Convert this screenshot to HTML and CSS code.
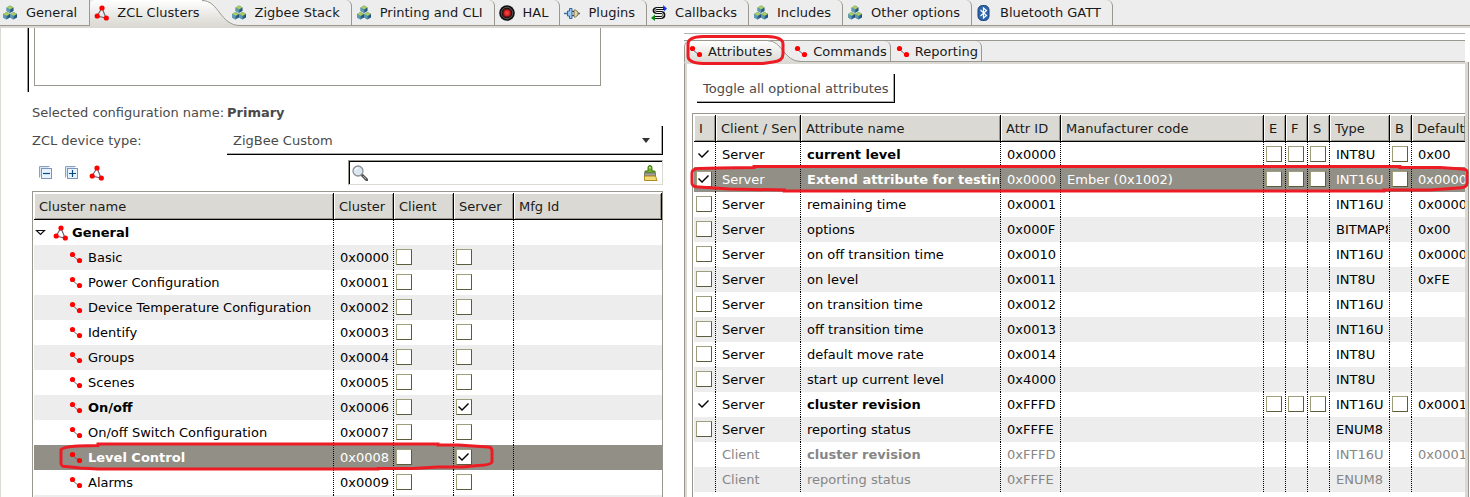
FILE: index.html
```html
<!DOCTYPE html>
<html lang="en">
<head>
<meta charset="utf-8">
<title>ZCL Clusters</title>
<link rel="stylesheet" href="styles.css">
</head>
<body>
<svg class="sprite" aria-hidden="true">
  <defs>
    <linearGradient id="tabfill" x1="0" y1="0" x2="0" y2="1"><stop offset="0" stop-color="#fff"/><stop offset="1" stop-color="#dad9d3"/></linearGradient>
    <linearGradient id="side" x1="0" y1="0" x2="1" y2="0"><stop offset="0" stop-color="#4f8fb5"/><stop offset="1" stop-color="#1d4a78"/></linearGradient>
    <radialGradient id="lamp"><stop offset="0" stop-color="#ff5050"/><stop offset="1" stop-color="#b80c0c"/></radialGradient>
    <g id="cube"><path d="M0 2 3.500 0 7 2 7 5.500 3.500 7.500 0 5.500z" fill="url(#side)"/><path d="M0 2 3.500 0 7 2 3.500 4z" fill="#a9cc62"/><path d="M0 2 3.500 4V7.500L0 5.500z" fill="#5f9bb0"/></g>
  </defs>
  <symbol id="cubes" viewBox="0 0 16 16"><use href="#cube" x="4.500" y="0.500"/><use href="#cube" x="1" y="7"/><use href="#cube" x="8" y="7"/></symbol>
  <symbol id="cluster" viewBox="0 0 16 16"><path d="M8 3 3 11 12 13z" fill="none" stroke="#667" stroke-width="1.200"/><g fill="#f00"><circle cx="8" cy="3" r="2.600"/><circle cx="3.200" cy="11" r="2.600"/><circle cx="12.300" cy="13" r="2.600"/></g></symbol>
  <symbol id="link" viewBox="0 0 16 16"><path d="M4 5 11 11" stroke="#667" stroke-width="1"/><g fill="#f00"><circle cx="4.500" cy="4.500" r="2.600"/><circle cx="11.500" cy="10.500" r="2.600"/></g></symbol>
  <symbol id="hal" viewBox="0 0 16 16"><circle cx="8" cy="8" r="7.800" fill="#111"/><circle cx="8" cy="8" r="5.700" fill="none" stroke="#666" stroke-width=".8"/><circle cx="8" cy="8" r="4" fill="url(#lamp)" stroke="#701010"/></symbol>
  <symbol id="plug" viewBox="0 0 16 16"><path d="M0 8.500h4M13 8.500h3" stroke="#3a6ba5" stroke-width="1.500"/><path d="M3.500 6h2V3.500h2.500v10H5.500V11h-2z" fill="#9cc7ee" stroke="#2f66a3"/><path d="M10 5h1.500l2.500 2v3l-2.500 2H10z" fill="#e3d59a" stroke="#7d7350"/><path d="M8 6.500h2M8 10.500h2" stroke="#446"/></symbol>
  <symbol id="callback" viewBox="0 0 16 16"><path d="M13 3.500H6C2 3.500 2 7.500 6 7.500h4c4 0 4 5 0 5H3" fill="none" stroke="#111" stroke-width="2.800"/><path d="M12 3.500H6C3 3.500 3 7.500 6 7.500h4c3 0 3 5 0 5H4" fill="none" stroke="#eee" stroke-width="1"/><path d="M12 0l4 3.500-3 3z" fill="#1536ee"/><path d="M4 9.500 0 13l4 3z" fill="#078b12"/></symbol>
  <symbol id="bluetooth" viewBox="0 0 16 16"><rect x="2" y=".5" width="11" height="15" rx="4.500" fill="#2e67ad" stroke="#173f7b"/><path d="M4.500 5l6 5.500-3 2.500V3l3 2.500-6 5.500" fill="none" stroke="#fff" stroke-width="1.200"/></symbol>
  <symbol id="collapse" viewBox="0 0 16 16"><path d="M2.500 12.500v-11h10" fill="#d9e8f6" stroke="#8aa0c4"/><rect x="4.500" y="3.500" width="10" height="10" fill="#e8f4fd" stroke="#7f93b8"/><path d="M6 8.500h7" stroke="#0b4a80" stroke-width="1.200"/></symbol>
  <symbol id="expand" viewBox="0 0 16 16"><path d="M2.500 12.500v-11h10" fill="#d9e8f6" stroke="#8aa0c4"/><rect x="4.500" y="3.500" width="10" height="10" fill="#e8f4fd" stroke="#7f93b8"/><path d="M6 8.500h7M9.500 5v7" stroke="#0b4a80" stroke-width="1.200"/></symbol>
  <symbol id="lens" viewBox="0 0 16 16"><path d="M10 10l5 5" stroke="#555" stroke-width="3" stroke-linecap="round"/><path d="M11 11l3 3" stroke="#aaa"/><circle cx="6" cy="6" r="5" fill="#dbe8f2" stroke="#8c9195" stroke-width="1.300"/><path d="M3 6a3 3 0 0 1 3-3" stroke="#fff" fill="none"/></symbol>
  <symbol id="brush" viewBox="0 0 16 16"><path d="M6 6V2.500a2 2 0 0 1 4 0V6h3v2H3V6z" fill="#73aa27" stroke="#3f7b10"/><path d="M8 2v1.500" stroke="#fff"/><path d="M2.500 8h11v3h-11z" fill="#a0a09a" stroke="#777"/><path d="M2.500 11h11l1.500 4.500H2.500z" fill="#f2dc75" stroke="#af8a20"/></symbol>
  <symbol id="open" viewBox="0 0 16 16"><path d="M2.500 5.500h8l-4 4z" fill="#fff" stroke="#111" stroke-width="1.200"/></symbol>
</svg>

<nav class="tabs" role="tablist" aria-label="Configuration">
  <button class="tab first" role="tab"><svg class="icon"><use href="#cubes"/></svg><span>General</span></button>
  <button class="tab active" role="tab" aria-selected="true"><svg class="icon"><use href="#cluster"/></svg><span>ZCL Clusters</span><svg class="curve" viewBox="0 0 38 26" aria-hidden="true"><path d="M0 0C17 0 18 25.500 38 25.500V26H0z" fill="url(#tabfill)"/><path d="M0 .5C17 .5 18 25.500 38 25.500" fill="none" stroke="#9a978e"/></svg></button>
  <button class="tab" role="tab"><svg class="icon"><use href="#cubes"/></svg><span>Zigbee Stack</span></button>
  <button class="tab" role="tab"><svg class="icon"><use href="#cubes"/></svg><span>Printing and CLI</span></button>
  <button class="tab" role="tab"><svg class="icon"><use href="#hal"/></svg><span>HAL</span></button>
  <button class="tab" role="tab"><svg class="icon"><use href="#plug"/></svg><span>Plugins</span></button>
  <button class="tab" role="tab"><svg class="icon"><use href="#callback"/></svg><span>Callbacks</span></button>
  <button class="tab" role="tab"><svg class="icon"><use href="#cubes"/></svg><span>Includes</span></button>
  <button class="tab" role="tab"><svg class="icon"><use href="#cubes"/></svg><span>Other options</span></button>
  <button class="tab" role="tab"><svg class="icon"><use href="#bluetooth"/></svg><span>Bluetooth GATT</span></button>
</nav>

<main class="workspace">
  <section class="clusters">
    <div class="group"><div class="list"></div></div>
    <div class="form">
      <span>Selected configuration name:</span><strong>Primary</strong>
      <label for="device">ZCL device type:</label>
      <div class="combo"><select id="device"><option>ZigBee Custom</option></select><svg class="arrow" viewBox="0 0 8 5" aria-hidden="true"><path d="M0 0h8L4 5z"/></svg></div>
    </div>
    <div class="toolbar">
      <button class="tool" aria-label="Collapse all"><svg class="icon"><use href="#collapse"/></svg></button>
      <button class="tool" aria-label="Expand all"><svg class="icon"><use href="#expand"/></svg></button>
      <button class="tool" aria-label="Clusters"><svg class="icon"><use href="#cluster"/></svg></button>
      <div class="search"><svg class="icon"><use href="#lens"/></svg><input type="text" aria-label="Search clusters"><button class="tool" aria-label="Clear"><svg class="icon"><use href="#brush"/></svg></button></div>
    </div>
    <div class="frame">
      <table>
        <colgroup><col class="w300"><col class="w60"><col class="w60"><col class="w60"><col></colgroup>
        <thead><tr><th>Cluster name</th><th>Cluster</th><th>Client</th><th>Server</th><th>Mfg Id</th></tr></thead>
        <tbody>
          <tr><td class="tree"><div class="node root"><svg class="icon"><use href="#open"/></svg><svg class="icon"><use href="#cluster"/></svg><b>General</b></div></td><td></td><td></td><td></td><td></td></tr>
          <tr><td class="tree"><div class="node"><svg class="icon"><use href="#link"/></svg>Basic</div></td><td>0x0000</td><td class="box"><input type="checkbox" aria-label="Basic client"></td><td class="box"><input type="checkbox" aria-label="Basic server"></td><td></td></tr>
          <tr><td class="tree"><div class="node"><svg class="icon"><use href="#link"/></svg>Power Configuration</div></td><td>0x0001</td><td class="box"><input type="checkbox" aria-label="Power Configuration client"></td><td class="box"><input type="checkbox" aria-label="Power Configuration server"></td><td></td></tr>
          <tr><td class="tree"><div class="node"><svg class="icon"><use href="#link"/></svg>Device Temperature Configuration</div></td><td>0x0002</td><td class="box"><input type="checkbox" aria-label="Device Temperature client"></td><td class="box"><input type="checkbox" aria-label="Device Temperature server"></td><td></td></tr>
          <tr><td class="tree"><div class="node"><svg class="icon"><use href="#link"/></svg>Identify</div></td><td>0x0003</td><td class="box"><input type="checkbox" aria-label="Identify client"></td><td class="box"><input type="checkbox" aria-label="Identify server"></td><td></td></tr>
          <tr><td class="tree"><div class="node"><svg class="icon"><use href="#link"/></svg>Groups</div></td><td>0x0004</td><td class="box"><input type="checkbox" aria-label="Groups client"></td><td class="box"><input type="checkbox" aria-label="Groups server"></td><td></td></tr>
          <tr><td class="tree"><div class="node"><svg class="icon"><use href="#link"/></svg>Scenes</div></td><td>0x0005</td><td class="box"><input type="checkbox" aria-label="Scenes client"></td><td class="box"><input type="checkbox" aria-label="Scenes server"></td><td></td></tr>
          <tr><td class="tree"><div class="node"><svg class="icon"><use href="#link"/></svg><b>On/off</b></div></td><td>0x0006</td><td class="box"><input type="checkbox" aria-label="On/off client"></td><td class="box"><input type="checkbox" checked aria-label="On/off server"></td><td></td></tr>
          <tr><td class="tree"><div class="node"><svg class="icon"><use href="#link"/></svg>On/off Switch Configuration</div></td><td>0x0007</td><td class="box"><input type="checkbox" aria-label="On/off Switch client"></td><td class="box"><input type="checkbox" aria-label="On/off Switch server"></td><td></td></tr>
          <tr class="selected"><td class="tree"><div class="node"><svg class="icon"><use href="#link"/></svg><b>Level Control</b></div></td><td>0x0008</td><td class="box"><input type="checkbox" aria-label="Level Control client"></td><td class="box"><input type="checkbox" checked aria-label="Level Control server"></td><td></td></tr>
          <tr><td class="tree"><div class="node"><svg class="icon"><use href="#link"/></svg>Alarms</div></td><td>0x0009</td><td class="box"><input type="checkbox" aria-label="Alarms client"></td><td class="box"><input type="checkbox" aria-label="Alarms server"></td><td></td></tr>
          <tr><td></td><td></td><td></td><td></td><td></td></tr>
        </tbody>
      </table>
      <svg class="mark mark-cluster" viewBox="0 0 438 30" aria-hidden="true"><path d="M60 27H320V26.500H355L380 25H405L420 23.500Q433 23 434 20V9Q434 5 430 5L415 4 400 3H380V2H40V3.500L20 4Q4 5 3 8V21Q3 25 8 24.500L22 26 40 27z"/></svg>
    </div>
  </section>

  <section class="details">
    <div class="folder">
      <div class="subtabs" role="tablist" aria-label="Cluster details">
        <button class="tab active" role="tab" aria-selected="true"><svg class="icon"><use href="#link"/></svg><span>Attributes</span><svg class="curve" viewBox="0 0 34 22" aria-hidden="true"><path d="M0 .5C16 .5 16 21.500 34 21.500V22H0z" fill="url(#tabfill)"/><path d="M0 .5C16 .5 16 21.500 34 21.500" fill="none" stroke="#9a978e"/></svg></button>
        <button class="tab" role="tab"><svg class="icon"><use href="#link"/></svg><span>Commands</span></button>
        <button class="tab" role="tab"><svg class="icon"><use href="#link"/></svg><span>Reporting</span></button>
        <svg class="mark mark-tab" viewBox="0 0 100 32" aria-hidden="true"><path d="M18 2.500H82Q98 3 98 10V20Q98 27 88 28L78 29.500H18Q3 29 3 22V10Q3 3 18 2.500z"/></svg>
      </div>
      <div class="page">
        <button class="toggle">Toggle all optional attributes</button>
        <div class="frame">
          <table>
            <colgroup><col class="w22"><col class="w85"><col class="w200"><col class="w60"><col><col class="w22"><col class="w22"><col class="w22"><col class="w60"><col class="w22"><col class="w53"></colgroup>
            <thead><tr><th>I</th><th>Client / Server</th><th>Attribute name</th><th>Attr ID</th><th>Manufacturer code</th><th>E</th><th>F</th><th>S</th><th>Type</th><th>B</th><th class="last">Default</th></tr></thead>
            <tbody>
              <tr><td class="box"><input class="bare" type="checkbox" checked aria-label="Include current level"></td><td>Server</td><td><b>current level</b></td><td>0x0000</td><td></td><td class="box"><input type="checkbox" aria-label="E"></td><td class="box"><input type="checkbox" aria-label="F"></td><td class="box"><input type="checkbox" aria-label="S"></td><td>INT8U</td><td class="box"><input type="checkbox" aria-label="B"></td><td>0x00</td></tr>
              <tr class="selected"><td class="box"><input type="checkbox" checked aria-label="Include extend attribute"></td><td>Server</td><td><b>Extend attribute for testing</b></td><td>0x0000</td><td>Ember (0x1002)</td><td class="box"><input type="checkbox" aria-label="E"></td><td class="box"><input type="checkbox" aria-label="F"></td><td class="box"><input type="checkbox" aria-label="S"></td><td>INT16U</td><td class="box"><input type="checkbox" aria-label="B"></td><td>0x0000</td></tr>
              <tr><td class="box"><input type="checkbox" aria-label="Include remaining time"></td><td>Server</td><td>remaining time</td><td>0x0001</td><td></td><td></td><td></td><td></td><td>INT16U</td><td></td><td>0x0000</td></tr>
              <tr><td class="box"><input type="checkbox" aria-label="Include options"></td><td>Server</td><td>options</td><td>0x000F</td><td></td><td></td><td></td><td></td><td>BITMAP8</td><td></td><td>0x00</td></tr>
              <tr><td class="box"><input type="checkbox" aria-label="Include on off transition time"></td><td>Server</td><td>on off transition time</td><td>0x0010</td><td></td><td></td><td></td><td></td><td>INT16U</td><td></td><td>0x0000</td></tr>
              <tr><td class="box"><input type="checkbox" aria-label="Include on level"></td><td>Server</td><td>on level</td><td>0x0011</td><td></td><td></td><td></td><td></td><td>INT8U</td><td></td><td>0xFE</td></tr>
              <tr><td class="box"><input type="checkbox" aria-label="Include on transition time"></td><td>Server</td><td>on transition time</td><td>0x0012</td><td></td><td></td><td></td><td></td><td>INT16U</td><td></td><td></td></tr>
              <tr><td class="box"><input type="checkbox" aria-label="Include off transition time"></td><td>Server</td><td>off transition time</td><td>0x0013</td><td></td><td></td><td></td><td></td><td>INT16U</td><td></td><td></td></tr>
              <tr><td class="box"><input type="checkbox" aria-label="Include default move rate"></td><td>Server</td><td>default move rate</td><td>0x0014</td><td></td><td></td><td></td><td></td><td>INT8U</td><td></td><td></td></tr>
              <tr><td class="box"><input type="checkbox" aria-label="Include start up current level"></td><td>Server</td><td>start up current level</td><td>0x4000</td><td></td><td></td><td></td><td></td><td>INT8U</td><td></td><td></td></tr>
              <tr><td class="box"><input class="bare" type="checkbox" checked aria-label="Include cluster revision"></td><td>Server</td><td><b>cluster revision</b></td><td>0xFFFD</td><td></td><td class="box"><input type="checkbox" aria-label="E"></td><td class="box"><input type="checkbox" aria-label="F"></td><td class="box"><input type="checkbox" aria-label="S"></td><td>INT16U</td><td class="box"><input type="checkbox" aria-label="B"></td><td>0x0001</td></tr>
              <tr><td class="box"><input type="checkbox" aria-label="Include reporting status"></td><td>Server</td><td>reporting status</td><td>0xFFFE</td><td></td><td></td><td></td><td></td><td>ENUM8</td><td></td><td></td></tr>
              <tr class="off"><td></td><td>Client</td><td><b>cluster revision</b></td><td>0xFFFD</td><td></td><td></td><td></td><td></td><td>INT16U</td><td></td><td>0x0001</td></tr>
              <tr class="off"><td></td><td>Client</td><td>reporting status</td><td>0xFFFE</td><td></td><td></td><td></td><td></td><td>ENUM8</td><td></td><td></td></tr>
            </tbody>
          </table>
          <svg class="mark mark-attribute" viewBox="0 0 780 30" preserveAspectRatio="none" aria-hidden="true"><path d="M65 2.500H710V3.500H750L772 5Q777 5 777 8V19Q777 24 768 24L740 26H694V27H95V26L40 25 10 23Q3 23 3 19V9Q3 5 10 4.500L30 4 65 3.500z"/></svg>
        </div>
      </div>
    </div>
  </section>
</main>
</body>
</html>
```

FILE: styles.css
```css
* { box-sizing: border-box; }

body {
  margin: 0;
  height: 100vh;
  overflow: hidden;
  display: flex;
  flex-direction: column;
  background: #fff;
  color: #1a1a1a;
  font: 13px/16px "DejaVu Sans", sans-serif;
}

button, input, select {
  font: inherit;
  color: inherit;
  margin: 0;
  padding: 0;
  border: 0;
  border-radius: 0;
  background: none;
}

.sprite { position: absolute; width: 0; height: 0; }
.icon { width: 16px; height: 16px; flex: none; display: block; }

/* Tab strips */
.tabs, .subtabs {
  display: flex;
  flex: none;
  background: #ededed linear-gradient(#9a978e, #9a978e) bottom / 100% 1px no-repeat;
}
.tabs { height: 26px; }

.tab {
  display: flex;
  align-items: center;
  flex: none;
  gap: 8px;
  padding: 0 11px 0 4px;
  border-right: 1px solid #9a978e;
  border-top-right-radius: 6px;
  white-space: nowrap;
}
.tab.first { padding-left: 2px; padding-right: 12px; border-radius: 0; }
.tab span { position: relative; z-index: 1; }

.tab.active {
  gap: 7px;
  padding-right: 0;
  border: 0;
  border-top-left-radius: 6px;
  background: linear-gradient(#fff, #dad9d3) left / calc(100% - 25px) 100% no-repeat;
}
.curve { flex: none; width: 38px; height: 26px; margin: 0 -13px 0 -5px; }

/* Workspace */
.workspace {
  flex: 1;
  min-height: 0;
  display: grid;
  grid-template-columns: 684fr 786fr;
  border-top: 2px solid #dad9d3;
}

.clusters {
  min-width: 0;
  padding: 0 21px 0 31px;
  border-left: 1px solid #dad9d3;
  display: flex;
  flex-direction: column;
}

.group {
  flex: none;
  height: 64px;
  margin-left: -5px;
  padding: 0 62px 6px 6px;
  border-left: 1px solid #9a978e;
  box-shadow: inset 1px 0 #000;
}
.list { height: 58px; border: 1px solid #9a978e; border-top: 0; }

.form {
  display: grid;
  grid-template-columns: 195px 1fr;
  grid-template-rows: 24px 29px;
  row-gap: 1px;
  align-items: center;
  margin-top: 9px;
  color: #4a4a4a;
}

.combo {
  display: grid;
  align-items: center;
  height: 29px;
  border-right: 1px solid #000;
  border-bottom: 1px solid #000;
  box-shadow: inset -1px -1px #aaa;
}
.combo select, .combo .arrow { grid-area: 1 / 1; }
.combo select { appearance: none; width: 100%; height: 28px; padding: 2px 0 0 6px; }
.combo .arrow { width: 8px; height: 5px; justify-self: end; margin-right: 12px; fill: #333; }

.toolbar { display: flex; height: 25px; flex: none; align-items: center; margin-top: 5px; padding-left: 5px; gap: 10px; }
.search {
  display: flex;
  align-items: center;
  width: 315px;
  height: 25px;
  margin-left: auto;
  padding: 0 4px 0 3px;
  border: 1px solid #dad9d3;
  border-top-color: #9a978e;
  border-left-color: #9a978e;
  box-shadow: inset 1px 1px #000;
}
.search input { flex: 1; min-width: 0; outline: 0; }

/* Tables */
.frame {
  position: relative;
  flex: 1;
  margin-top: 6px;
  padding: 1px 0 0 1px;
  border: 1px solid #9a978e;
  border-bottom: 0;
}

table { width: 100%; table-layout: fixed; border-spacing: 0; color: #000; }
.w22 { width: 22px; }
.w53 { width: 53px; }
.w60 { width: 60px; }
.w85 { width: 85px; }
.w200 { width: 200px; }
.w300 { width: 300px; }

th, td {
  overflow: clip;
  overflow-clip-margin: content-box;
  white-space: nowrap;
  text-align: left;
}
th {
  height: 27px;
  padding: 2px 4px 0 5px;
  font-weight: normal;
  color: #1a1a1a;
  background: #dad9d3;
  border-right: 1px solid #000;
  border-bottom: 1px solid #000;
  box-shadow: inset 1px 1px #fff, inset -1px -1px #9a978e;
}
th.last { padding-right: 0; border-right: 0; }
td { height: 25px; padding: 0 1px 0 6px; border-right: 1px dotted #000; }
td:last-child { border-right: 0; padding-right: 0; }
tbody tr:nth-child(even) { background: #ededed; }
tbody .selected, tbody .selected:nth-child(even) { background: #928f86; color: #fff; }
.off { color: #868686; }

.tree { padding-left: 0; }
.node { display: flex; align-items: center; gap: 4px; padding-left: 34px; }
.node.root { padding-left: 0; gap: 3px; }

.box { padding: 4px 0 0 2px; vertical-align: top; }
.box input {
  appearance: none;
  display: block;
  width: 16px;
  height: 16px;
  border: 1px solid #5c5c3c;
  border-top-color: #a09f7c;
  border-left-color: #a09f7c;
  background: #fff;
}
.box .bare { border-color: transparent; background: none; }
.box input:checked::before {
  content: "";
  display: block;
  width: 14px;
  height: 14px;
  background: #000;
  clip-path: polygon(1px 7px, 2px 6px, 5px 9px, 11px 3px, 12px 4px, 5px 11px);
}

/* Details pane */
.details { min-width: 0; display: flex; flex-direction: column; padding-top: 5px; }
.folder {
  flex: 1;
  display: flex;
  flex-direction: column;
  margin-right: 5px;
  padding-top: 6px;
  border-top: 1px solid #b5b5b5;
}
.subtabs { position: relative; height: 22px; border-top: 1px solid #9a978e; }
.subtabs .tab { gap: 4px; padding-right: 3px; }
.subtabs .active { padding: 0 0 0 3px; background-size: calc(100% - 22px) 100%; border-left: 1px solid #9a978e; }
.subtabs .curve { width: 34px; height: 22px; margin: -1px -12px 0 -9px; }

.page {
  flex: 1;
  display: flex;
  flex-direction: column;
  align-items: flex-start;
  padding: 10px 0 0 5px;
  border-left: 1px solid #9a978e;
  border-top: 2px solid #dad9d3;
  box-shadow: inset 2px 0 #dad9d3, 3px 0 #dad9d3, 4px 0 #9a978e;
}
.toggle {
  height: 29px;
  margin-left: 7px;
  padding: 2px 5px 0 6px;
  color: #4a4a4a;
  border-right: 1px solid #000;
  border-bottom: 1px solid #000;
  box-shadow: inset -1px -1px #aaa;
}
.page .frame { align-self: stretch; margin: 10px 0 0 2px; border-right: 0; }

/* Hand-drawn highlights */
.mark { position: absolute; z-index: 2; overflow: visible; pointer-events: none; }
.mark path { fill: none; stroke: #ed1c24; stroke-width: 3px; vector-effect: non-scaling-stroke; }
.mark-cluster { left: 25px; top: 250px; width: 438px; height: 30px; }
.mark-attribute { left: -4px; top: 50px; width: calc(100% + 9px); height: 30px; }
.mark-tab { left: 1px; top: -7px; width: 100px; height: 32px; }
```
